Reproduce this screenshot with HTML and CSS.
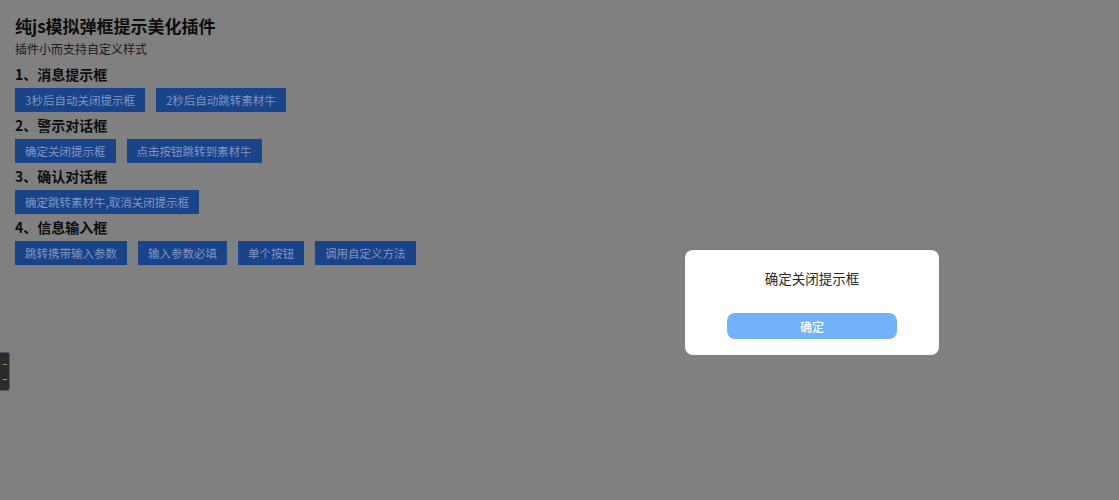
FILE: index.html
```html
<!DOCTYPE html>
<html lang="zh">
<head>
<meta charset="utf-8">
<title>纯js模拟弹框提示美化插件</title>
<link rel="stylesheet" href="styles.css">
</head>
<body>
<div class="page">
  <h1 class="title">纯js模拟弹框提示美化插件</h1>
  <p class="subtitle">插件小而支持自定义样式</p>
  <h2 class="section">1、消息提示框</h2>
  <div class="row">
    <button class="btn">3秒后自动关闭提示框</button>
    <button class="btn">2秒后自动跳转素材牛</button>
  </div>
  <h2 class="section">2、警示对话框</h2>
  <div class="row">
    <button class="btn">确定关闭提示框</button>
    <button class="btn">点击按钮跳转到素材牛</button>
  </div>
  <h2 class="section">3、确认对话框</h2>
  <div class="row">
    <button class="btn">确定跳转素材牛,取消关闭提示框</button>
  </div>
  <h2 class="section">4、信息输入框</h2>
  <div class="row">
    <button class="btn">跳转携带输入参数</button>
    <button class="btn">输入参数必填</button>
    <button class="btn">单个按钮</button>
    <button class="btn">调用自定义方法</button>
  </div>
</div>
<div class="side-tab"><span class="tick"></span><span class="tick"></span></div>
<div class="dialog">
  <p class="dialog-text">确定关闭提示框</p>
  <button class="dialog-btn">确定</button>
</div>
</body>
</html>
```
FILE: styles.css
```css
html, body {
  margin: 0;
  padding: 0;
  background: #808080;
  font-family: "Noto Sans CJK SC", "Noto Sans", sans-serif;
  height: 100%;
  overflow: hidden;
}
.page {
  padding: 14px 15px 0;
}
.title {
  margin: 0;
  font-size: 17px;
  line-height: 24px;
  font-weight: 700;
  color: #0d0d0d;
}
.subtitle {
  margin: 2px 0 3px;
  font-size: 12px;
  line-height: 18px;
  color: #1a1a1a;
}
.section {
  margin: 0;
  font-size: 14px;
  line-height: 27px;
  font-weight: 700;
  color: #0d0d0d;
}
.row {
  display: flex;
  gap: 11px;
}
.btn {
  height: 24px;
  padding: 0 10px;
  border: 0;
  background: #1a448a;
  color: #8196bf;
  font-family: inherit;
  font-size: 11.5px;
  line-height: 24px;
  cursor: pointer;
}
.side-tab {
  position: absolute;
  left: 0;
  top: 352px;
  width: 9px;
  height: 37px;
  background: #2b2b2b;
  border: 1px solid #555;
  border-left: 0;
  border-radius: 0 3px 3px 0;
  display: flex;
  flex-direction: column;
  justify-content: center;
  align-items: center;
  gap: 14px;
}
.tick {
  width: 4px;
  height: 1px;
  background: #9a8f6a;
}
.tick + .tick {
  background: #8a9a8a;
}
.dialog {
  position: absolute;
  left: 685px;
  top: 250px;
  width: 254px;
  height: 105px;
  box-sizing: border-box;
  padding-top: 18px;
  background: #fff;
  border-radius: 8px;
  display: flex;
  flex-direction: column;
  align-items: center;
}
.dialog-text {
  margin: 0;
  font-size: 13.5px;
  line-height: 20px;
  color: #2a2a2a;
}
.dialog-btn {
  margin-top: 25px;
  width: 170px;
  height: 26px;
  border: 0;
  border-radius: 8px;
  background: #72b2fa;
  color: #fff;
  font-family: inherit;
  font-size: 12px;
  font-weight: 500;
  cursor: pointer;
}
```
